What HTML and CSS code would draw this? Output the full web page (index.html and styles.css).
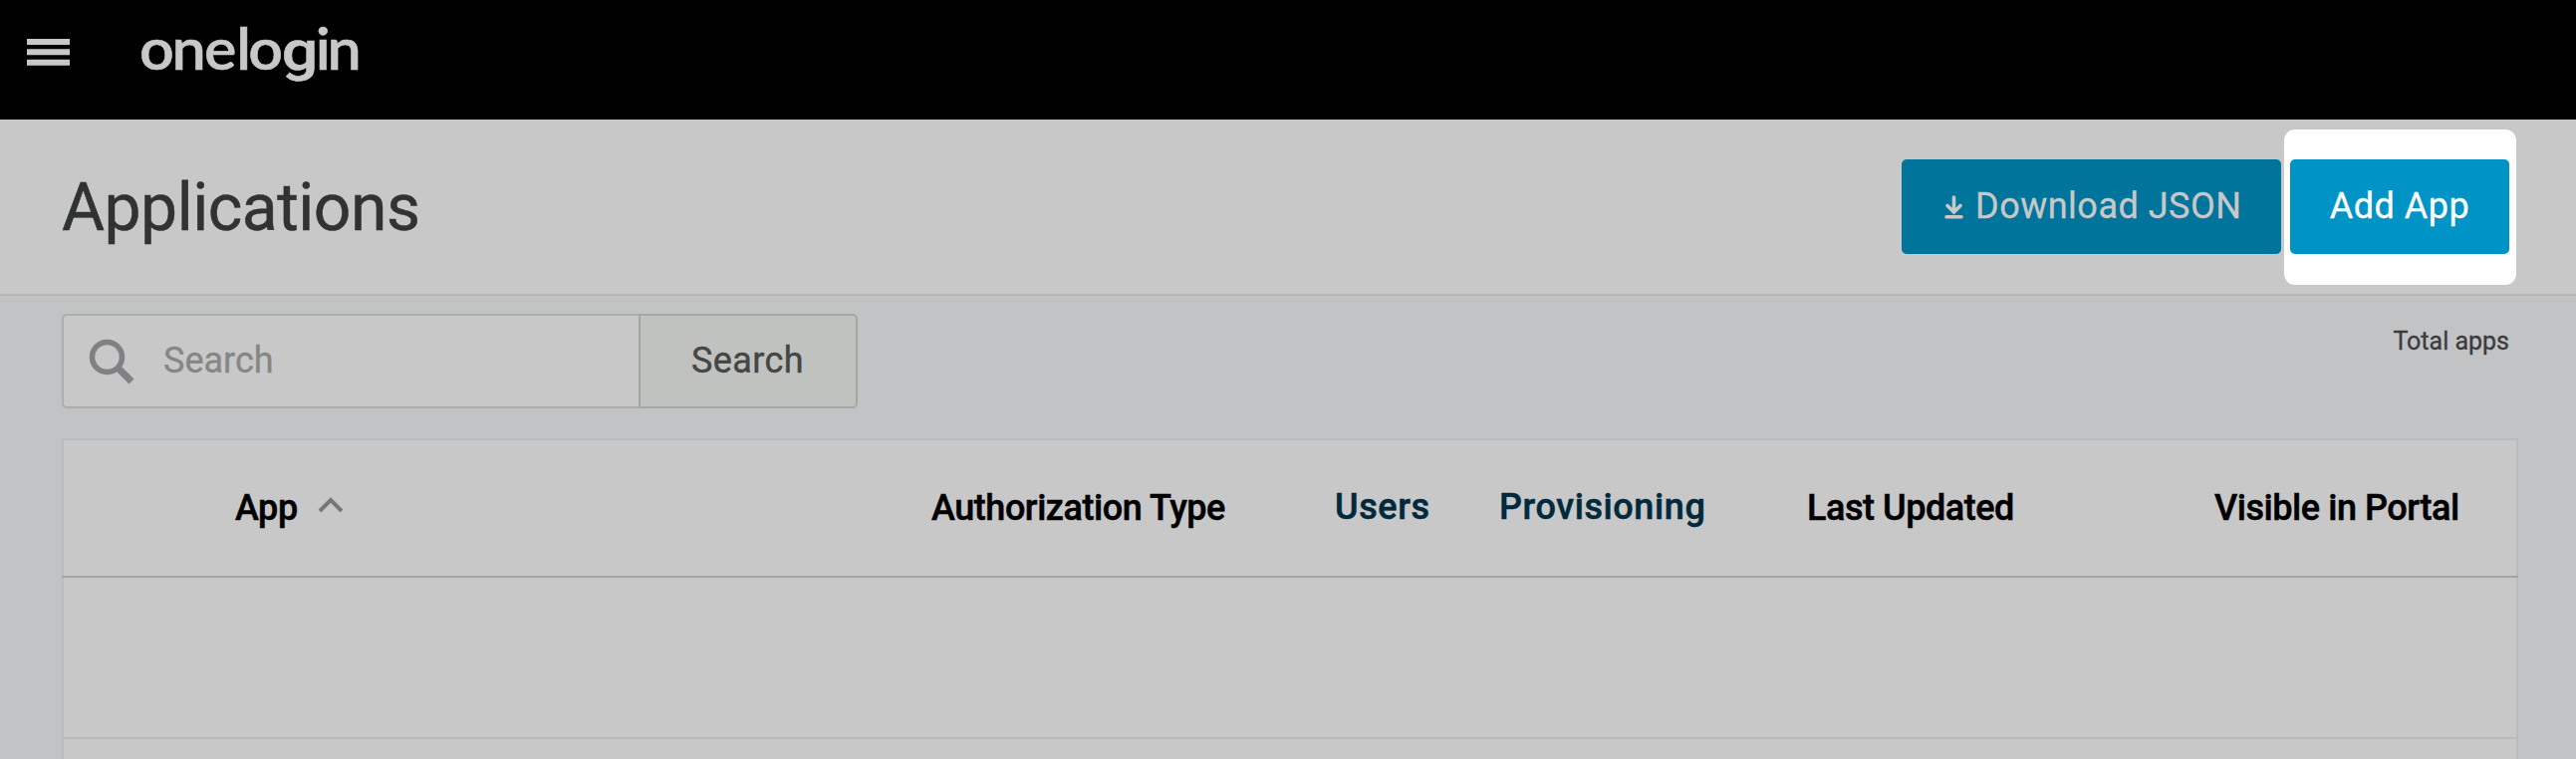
FILE: index.html
```html
<!DOCTYPE html>
<html lang="en">
<head>
<meta charset="utf-8">
<title>Applications</title>
<link rel="stylesheet" href="styles.css">
</head>
<body>
<header class="topbar">
  <svg class="menu" viewBox="0 0 43 27" width="43" height="27"><path d="M0 0h43v6H0zM0 10.3h43v6H0zM0 20.8h43v6H0z"/></svg>
  <svg class="logo" width="230" height="80" viewBox="0 0 230 80" role="img" aria-label="onelogin">
    <g transform="scale(1.07 1)"><text y="49" x="-1.8 28.5 58.9 89 100.3">onelo</text><text y="49" x="163.3 174.3">in</text></g>
    <text class="logo-g" transform="scale(1.15 1)" x="122.3" y="49">g</text>
  </svg>
</header>
<section class="titlebar">
  <h1 class="title">Applications</h1>
  <div class="actions">
    <button class="btn btn-dim"><svg class="dl" width="19" height="24" viewBox="0 0 19 24"><path d="M9.500 2v14M3 10.500l6.500 6.500 6.500-6.500M2 21.700h15"/></svg><span>Download JSON</span></button>
    <div class="spotlight"><button class="btn btn-add">Add App</button></div>
  </div>
</section>
<main class="content">
  <div class="toolbar">
    <form class="search">
      <div class="field">
        <svg class="glass" width="46" height="46" viewBox="0 0 46 46"><circle cx="18.500" cy="18.500" r="15"/><path class="handle" d="M29.500 29.500l13.500 13.500"/></svg>
        <span class="placeholder">Search</span>
      </div>
      <button class="search-btn" type="button">Search</button>
    </form>
    <span class="total">Total apps</span>
  </div>
  <div class="table">
    <div class="thead">
      <div class="th">App<svg class="sort" width="26" height="16" viewBox="0 0 26 16"><path d="M2 14L13 3l11 11"/></svg></div>
      <div class="th">Authorization Type</div>
      <div class="th link">Users</div>
      <div class="th link">Provisioning</div>
      <div class="th">Last Updated</div>
      <div class="th">Visible in Portal</div>
    </div>
    <div class="row"></div>
    <div class="row row-last"></div>
  </div>
</main>
</body>
</html>
```
FILE: styles.css
```css
* { box-sizing: border-box; }
body {
  margin: 0;
  height: 762px;
  overflow: hidden;
  background: #c2c3c5;
  font-family: Roboto, sans-serif;
  font-size: 36px;
  color: #303331;
}
button { font: inherit; border: 0; margin: 0; padding: 0; }
.topbar {
  height: 120px;
  background: #000;
  display: flex;
  align-items: flex-start;
  padding-left: 27px;
}
.menu { margin-top: 39px; fill: #c8c8c8; }
.logo {
  margin: 21px 0 0 72px;
  fill: #c8c8c8;
  stroke: #c8c8c8;
  stroke-width: .5;
  font: 600 57px Lato, sans-serif;
  overflow: visible;
}
.logo-g { font: 500 56px Roboto, sans-serif; }
.titlebar {
  height: 177px;
  background: #c8c8c8;
  border-bottom: 2px solid #b5b6b6;
  display: flex;
  justify-content: space-between;
  padding: 10px 60px 0 62px;
}
.title {
  margin: 41px 0 0;
  font-size: 66px;
  line-height: 76px;
  font-weight: 400;
  letter-spacing: -.5px;
  -webkit-text-stroke: .5px;
}
.actions { display: flex; gap: 3px; }
.btn {
  height: 95px;
  border-radius: 5px;
  letter-spacing: .5px;
  line-height: 95px;
  -webkit-text-stroke: .3px;
}
.btn-dim {
  width: 381px;
  margin-top: 30px;
  padding-left: 43px;
  background: #00749b;
  color: #c8c8c8;
  display: flex;
  align-items: center;
}
.dl { margin-right: 12px; fill: none; stroke: #c8c8c8; stroke-width: 3.6; stroke-linecap: round; }
.spotlight {
  width: 233px;
  height: 156px;
  padding: 30px 7px 0 6px;
  background: #fff;
  border-radius: 11px;
}
.btn-add { width: 220px; background: #0094c6; color: #fff; }
.content { padding: 18px 58px 0 62px; }
.toolbar { display: flex; justify-content: space-between; height: 125px; }
.search { display: flex; width: 799px; height: 95px; }
.field {
  width: 579px;
  background: #c8c8c8;
  border: 2px solid #adafad;
  border-right: 0;
  border-radius: 5px 0 0 5px;
  display: flex;
  align-items: center;
  padding-left: 25px;
}
.glass { fill: none; stroke: #808085; stroke-width: 5.5; }
.handle { stroke-width: 7; }
.placeholder { margin: -2px 0 0 29px; color: #858785; -webkit-text-stroke: .3px; }
.search-btn {
  width: 220px;
  background: #c0c2c0;
  border: 2px solid #a5a7a5;
  border-radius: 0 5px 5px 0;
  color: #444645;
  letter-spacing: .4px;
  padding: 0 1px 2px 0;
  -webkit-text-stroke: .4px;
}
.total { margin: 13px 9px 0 0; font-size: 25px; line-height: 30px; color: #3a3b3c; -webkit-text-stroke: .3px; }
.table { height: 322px; border: 2px solid #babbbc; border-bottom: 0; background: #c8c8c8; }
.thead {
  height: 138px;
  margin: 0 -2px;
  padding-left: 174px;
  display: grid;
  grid-template-columns: 699px 405px 165px 309px 409px 1fr;
  align-items: center;
  border-bottom: 2px solid #a5a5a5;
}
.th {
  font-weight: 500;
  color: #000;
  white-space: nowrap;
  line-height: 42px;
  letter-spacing: -.45px;
  -webkit-text-stroke: .5px;
}
.link { color: #00293e; letter-spacing: .6px; padding-bottom: 2px; }
.sort { margin-left: 20px; vertical-align: 7px; fill: none; stroke: #777; stroke-width: 4; }
.row { height: 162px; border-bottom: 2px solid #bababa; }
.row-last { height: 20px; border-bottom: 0; }
```
